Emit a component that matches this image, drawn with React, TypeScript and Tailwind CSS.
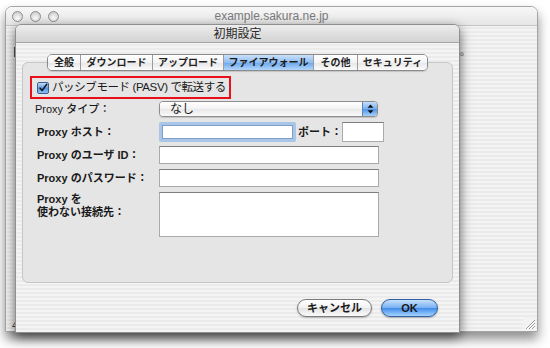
import React from "react";

const stripes =
  "bg-[repeating-linear-gradient(0deg,#f4f4f4_0px,#f4f4f4_2px,#ebebeb_2px,#ebebeb_4px)]";

const TrafficLight = () => (
  <div className="w-[11px] h-[11px] rounded-full border border-[#8e8e8e] bg-[radial-gradient(circle_at_50%_70%,#ffffff_0%,#e4e4e4_45%,#bdbdbd_100%)]" />
);

const tabs = ["全般", "ダウンロード", "アップロード", "ファイアウォール", "その他", "セキュリティ"];
const tabWidths = ["w-[32px]", "w-[72px]", "w-[71px]", "w-[90px]", "w-[44px]", "w-[70px]"];

const Checkbox = () => (
  <div className="w-[12px] h-[12px] shrink-0 rounded-[2px] border border-[#3b5f94] bg-[linear-gradient(#c4dcf7,#5b97df_55%,#8fbdf0)] flex items-center justify-center">
    <svg width="12" height="12" viewBox="0 0 12 12">
      <path d="M2.5 6.2 L5 9 L10.5 1.5" fill="none" stroke="#101820" strokeWidth="1.8" strokeLinecap="round" strokeLinejoin="round" />
    </svg>
  </div>
);

const TextInput = ({ className }: { className: string }) => (
  <div className={`bg-white border border-[#aaaaaa] border-t-[#7d7d7d] ${className}`} />
);

const App = () => {
  return (
    <div className="relative w-[550px] h-[348px] bg-white overflow-hidden font-['Liberation_Sans','Noto_Sans_CJK_JP',sans-serif] text-[#1a1a1a]">
      {/* main window behind */}
      <div className="pt-[6px] pl-[5px]">
        <div className="w-[533px] h-[326px] rounded-t-[7px] border border-[#a4a4a4] shadow-[0_7px_12px_rgba(0,0,0,0.45)] flex flex-col overflow-hidden">
          <div className="h-[19px] shrink-0 bg-[linear-gradient(#f7f7f7,#e6e6e6)] border-b border-[#c4c4c4] relative flex items-center">
            <div className="flex gap-[7px] pl-[6px]">
              <TrafficLight />
              <TrafficLight />
              <TrafficLight />
            </div>
            <div className="absolute inset-0 flex items-center justify-center text-[12px] text-[#7a7a7a]">
              example.sakura.ne.jp
            </div>
          </div>
          <div className={`flex-1 relative ${stripes}`}>
            <div className="flex justify-end pr-[67px] pt-[18px] text-[10px] text-[#333]">
              保存しました。
            </div>
            <div className="ml-[8px] mt-[-12px] w-[3px] h-[10px] bg-[#555]" />
            <div className="absolute left-[6px] bottom-[0px] text-[11px] text-[#444] leading-[12px]">4</div>
            <svg className="absolute right-[1px] bottom-[1px]" width="13" height="13" viewBox="0 0 13 13">
              <rect x="0" y="0" width="13" height="13" fill="#f2f2f2" />
              <path d="M12 3 L3 12 M12 6 L6 12 M12 9 L9 12" stroke="#9a9a9a" strokeWidth="1" />
              <path d="M12 4 L4 12 M12 7 L7 12 M12 10 L10 12" stroke="#ffffff" strokeWidth="1" />
            </svg>
          </div>
        </div>
      </div>

      {/* sheet dialog */}
      <div className="absolute left-[15px] top-[24px] w-[445px] h-[309px] rounded-t-[6px] border border-[#8f8f8f] shadow-[0_4px_12px_rgba(0,0,0,0.6)] flex flex-col overflow-hidden">
        <div className="h-[18px] shrink-0 bg-[linear-gradient(#ededed,#d3d3d3)] border-b border-[#a4a4a4] flex items-center justify-center text-[12px] text-[#2a2a2a]">
          初期設定
        </div>
        <div className={`flex-1 ${stripes} flex flex-col px-[6px] pt-[11px]`}>
          {/* tabs */}
          <div className="relative z-10 flex justify-center">
            <div className="flex h-[17px] rounded-[5px] border border-[#8a8a8a] overflow-hidden shadow-[0_1px_1px_rgba(0,0,0,0.15)]">
              {tabs.map((t, i) => (
                <div
                  key={t}
                  className={`${tabWidths[i]} flex items-center justify-center text-[10px] font-bold leading-none ${
                    i > 0 ? "border-l border-[#9c9c9c]" : ""
                  } ${
                    i === 3
                      ? "bg-[linear-gradient(#c9e0fb,#8fbdf1_50%,#6aa6ec_51%,#b2d6fb)] text-[#1a1a1a]"
                      : "bg-[linear-gradient(#ffffff,#f3f3f3_50%,#e6e6e6_51%,#fbfbfb)] text-[#222]"
                  }`}
                >
                  {t}
                </div>
              ))}
            </div>
          </div>

          {/* group box */}
          <div className="-mt-[9px] w-[431px] h-[221px] rounded-[6px] border border-[#c6c6c6] bg-[#e5e5e5] pt-[13px] pl-[7px] flex flex-col">
            <div className="w-[201px] h-[23px] border-2 border-[#e8101a] flex items-center gap-[3px] pl-[5px]">
              <Checkbox />
              <span className="text-[11.5px] leading-none whitespace-nowrap tracking-[-0.4px]">パッシブモード (PASV) で転送する</span>
            </div>

            <div className="pl-[5px] flex flex-col text-[11px]">
              <div className="mt-[2px] flex items-center h-[16px]">
                <div className="w-[124px] font-medium">Proxy タイプ：</div>
                <div className="w-[219px] h-[16px] rounded-[4px] border border-[#8d8d8d] flex overflow-hidden shadow-[0_1px_1px_rgba(0,0,0,0.15)]">
                  <div className="flex-1 bg-[linear-gradient(#ffffff,#f2f2f2_50%,#e8e8e8_51%,#fafafa)] text-[12px] pl-[10px] flex items-center leading-none">
                    なし
                  </div>
                  <div className="w-[15px] border-l border-[#5c83bb] bg-[linear-gradient(#c5defa,#78aff0_50%,#4d94e8_51%,#a9d0fb)] flex items-center justify-center">
                    <svg width="7" height="10" viewBox="0 0 7 10">
                      <path d="M3.5 0.5 L6.5 3.8 L0.5 3.8 Z M3.5 9.5 L6.5 6.2 L0.5 6.2 Z" fill="#111" />
                    </svg>
                  </div>
                </div>
              </div>

              <div className="mt-[5px] flex items-center h-[20px]">
                <div className="w-[124px] font-bold pl-[2px]">Proxy ホスト：</div>
                <div className="w-[137px] h-[20px] rounded-[2px] border-[3px] border-[#a9c6e8] p-0">
                  <div className="w-full h-full bg-white border border-[#7f9fc8]" />
                </div>
                <div className="w-[46px] font-bold pl-[2px]">ポート：</div>
                <TextInput className="w-[42px] h-[20px]" />
              </div>

              <div className="mt-[4px] flex items-center h-[18px]">
                <div className="w-[124px] font-bold pl-[2px]">Proxy のユーザ ID：</div>
                <TextInput className="w-[220px] h-[18px]" />
              </div>

              <div className="mt-[5px] flex items-center h-[18px]">
                <div className="w-[124px] font-bold pl-[2px]">Proxy のパスワード：</div>
                <TextInput className="w-[220px] h-[18px]" />
              </div>

              <div className="mt-[5px] flex items-start">
                <div className="w-[124px] font-bold pl-[2px] leading-[13px] pt-[1px]">
                  Proxy を
                  <br />
                  使わない接続先：
                </div>
                <TextInput className="w-[220px] h-[45px]" />
              </div>
            </div>
          </div>

          {/* buttons */}
          <div className="mt-[16px] flex justify-end gap-[9px] pr-[15px]">
            <div className="w-[75px] h-[18px] rounded-full border border-[#7b7b7b] bg-[linear-gradient(#ffffff,#f1f1f1_50%,#e3e3e3_51%,#fbfbfb)] flex items-center justify-center text-[11px] font-bold leading-none shadow-[0_1px_2px_rgba(0,0,0,0.25)]">
              キャンセル
            </div>
            <div className="w-[57px] h-[18px] rounded-full border border-[#30609f] bg-[linear-gradient(#c6e0fb,#77b0f2_50%,#3f8ceb_51%,#a6d3fd)] flex items-center justify-center text-[11px] font-bold leading-none shadow-[0_1px_2px_rgba(0,0,0,0.3)]">
              OK
            </div>
          </div>
        </div>
      </div>
    </div>
  );
};

export default App;
